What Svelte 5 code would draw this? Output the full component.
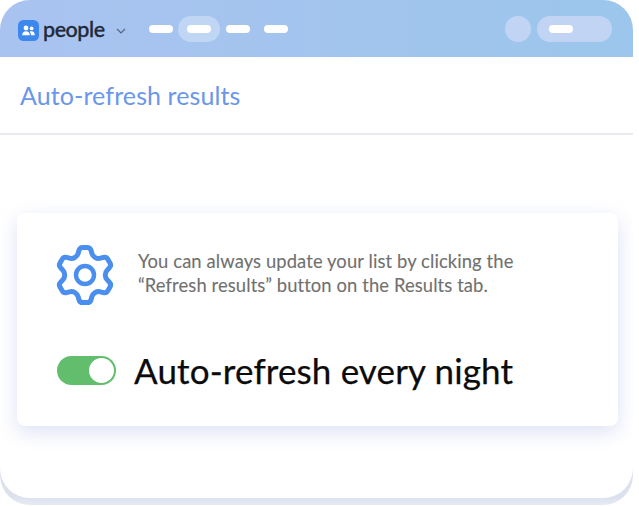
<script>
  const cx = 30, cy = 31;
  const shape = [[19, -7.6], [27.6, -5.2], [27.6, 5.2], [19, 7.6]];
  const pts = [];
  for (let k = 0; k < 6; k++) {
    const a = (k * Math.PI) / 3;
    for (const [r, t] of shape) {
      pts.push([cx + t * Math.cos(a) + r * Math.sin(a), cy + t * Math.sin(a) - r * Math.cos(a)]);
    }
  }
  const lerp = (p, q, f) => [p[0] + (q[0] - p[0]) * f, p[1] + (q[1] - p[1]) * f];
  const fmt = (p) => p[0].toFixed(2) + ' ' + p[1].toFixed(2);
  let gear = '';
  pts.forEach((p, i) => {
    const prev = pts[(i + pts.length - 1) % pts.length];
    const next = pts[(i + 1) % pts.length];
    const dp = Math.hypot(p[0] - prev[0], p[1] - prev[1]);
    const dn = Math.hypot(p[0] - next[0], p[1] - next[1]);
    const a = lerp(p, prev, Math.min(0.48, 3 / dp));
    const b = lerp(p, next, Math.min(0.48, 3 / dn));
    gear += (i === 0 ? 'M' : 'L') + fmt(a) + 'Q' + fmt(p) + ' ' + fmt(b);
  });
  gear += 'Z';
</script>

<div class="frame">
  <div class="window">
    <header class="top">
      <div class="brand">
        <svg class="logo" viewBox="0 0 21 21" width="21" height="21" aria-hidden="true">
          <rect width="21" height="21" rx="5.5" fill="#3d88ee" />
          <circle cx="8" cy="8" r="2.4" fill="#fff" />
          <circle cx="13.6" cy="8.4" r="1.9" fill="#fff" />
          <path d="M4.2 15.2c0-2.6 1.6-4 3.8-4s3.8 1.4 3.8 4z" fill="#fff" />
          <path d="M12.9 15.2c0-1.5-.4-2.7-1.2-3.5.6-.4 1.2-.5 1.9-.5 1.9 0 3.2 1.3 3.2 4z" fill="#fff" />
        </svg>
        <span class="word">people</span>
        <svg class="chev" viewBox="0 0 10 6" width="10" height="6" aria-hidden="true">
          <path d="M1 1l4 4 4-4" fill="none" stroke="#55647d" stroke-width="1.1" />
        </svg>
      </div>
      <nav class="nav">
        <span class="slot"><i></i></span>
        <span class="slot active"><i></i></span>
        <span class="slot"><i></i></span>
        <span class="slot"><i></i></span>
      </nav>
      <div class="right">
        <span class="dot"></span>
        <span class="pill"><i></i></span>
      </div>
    </header>

    <div class="titlebar"><h1>Auto-refresh results</h1></div>

    <main class="body">
      <section class="card">
        <div class="info">
          <svg class="gear" viewBox="0 0 60 62" width="60" height="62" aria-hidden="true">
            <path d={gear} fill="none" stroke="#4a8eee" stroke-width="5" />
            <circle cx="30" cy="31" r="9" fill="none" stroke="#4a8eee" stroke-width="4.4" />
          </svg>
          <p>You can always update your list by clicking the<br />“Refresh results” button on the Results tab.</p>
        </div>
        <div class="setting">
          <span class="toggle"><span class="knob"></span></span>
          <span class="label">Auto-refresh every night</span>
        </div>
      </section>
    </main>
  </div>
</div>

<style>
  :global(body) {
    margin: 0;
    background: #fff;
  }
  .frame {
    width: 633px;
    height: 505px;
    border-radius: 30px;
    background: linear-gradient(180deg, #dde1ed 0, #dde1ed 497px, #e6eaf5 505px);
  }
  .window {
    height: 498px;
    border-radius: 30px;
    background: #fff;
    overflow: hidden;
    font-family: Lato, "Liberation Sans", sans-serif;
    display: flex;
    flex-direction: column;
  }
  .top {
    height: 57px;
    flex: none;
    box-sizing: border-box;
    padding: 0 21px 0 18px;
    display: flex;
    align-items: center;
    background: linear-gradient(90deg, #a9c3f0, #9cc6ec);
  }
  .brand {
    display: flex;
    align-items: center;
    width: 131px;
    flex: none;
    margin-top: 3px;
  }
  .logo {
    flex: none;
  }
  .word {
    margin-left: 4px;
    margin-top: -2px;
    font-size: 21.5px;
    line-height: 24px;
    font-weight: 500;
    color: #1f2937;
    -webkit-text-stroke: 0.3px #1f2937;
    letter-spacing: -0.45px;
  }
  .chev {
    margin-left: 11px;
    margin-top: 1px;
  }
  .nav {
    display: flex;
    align-items: center;
    gap: 5px;
    margin-top: 1px;
  }
  .slot {
    display: flex;
    align-items: center;
    justify-content: center;
    height: 26px;
  }
  .slot:last-child {
    margin-left: 9px;
  }
  .slot.active {
    width: 42px;
    margin-right: 1px;
    border-radius: 13px;
    background: rgba(255, 255, 255, 0.3);
  }
  .slot i,
  .pill i {
    display: block;
    width: 24px;
    height: 8px;
    border-radius: 4px;
    background: #fff;
  }
  .right {
    margin-left: auto;
    display: flex;
    align-items: center;
    gap: 6px;
    margin-top: 1px;
  }
  .dot {
    width: 26px;
    height: 26px;
    border-radius: 50%;
    background: #c2d4f4;
  }
  .pill {
    width: 75px;
    height: 26px;
    border-radius: 13px;
    background: #c2d4f4;
    display: flex;
    align-items: center;
    padding-left: 12px;
    box-sizing: border-box;
  }
  .titlebar {
    height: 78px;
    flex: none;
    box-sizing: border-box;
    padding-left: 20px;
    display: flex;
    align-items: center;
    border-bottom: 2px solid #e9ebf1;
  }
  h1 {
    margin: 0;
    font-size: 25px;
    font-weight: 400;
    color: #6a96eb;
    letter-spacing: 0.1px;
  }
  .body {
    flex: 1;
    padding: 78px 15px 0 17px;
  }
  .card {
    height: 213px;
    box-sizing: border-box;
    padding: 31px 0 0 40px;
    border-radius: 8px;
    background: #fff;
    box-shadow: 0 6px 20px rgba(170, 180, 230, 0.4);
  }
  .info {
    display: flex;
    align-items: center;
    gap: 23px;
  }
  .gear {
    flex: none;
    margin-left: -2px;
  }
  p {
    margin: -5px 0 0;
    font-size: 18.4px;
    line-height: 24px;
    color: #707070;
    letter-spacing: 0.1px;
    -webkit-text-stroke: 0.1px #707070;
  }
  .setting {
    display: flex;
    align-items: center;
    gap: 18px;
    margin-top: 44px;
  }
  .toggle {
    width: 59px;
    height: 29px;
    box-sizing: border-box;
    padding: 2px;
    border-radius: 15px;
    background: #62bd6c;
    display: flex;
    justify-content: flex-end;
    flex: none;
  }
  .knob {
    width: 25px;
    height: 25px;
    border-radius: 50%;
    background: #fff;
  }
  .label {
    font-size: 35px;
    line-height: 40px;
    color: #0b0b0b;
    letter-spacing: 0.14px;
    -webkit-text-stroke: 0.25px #0b0b0b;
  }
</style>
